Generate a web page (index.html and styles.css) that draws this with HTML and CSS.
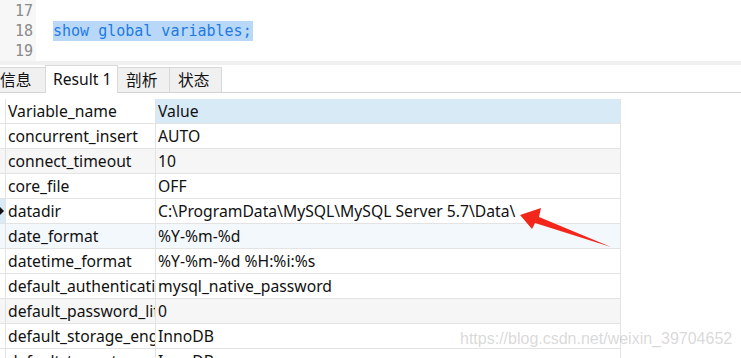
FILE: index.html
```html
<!DOCTYPE html>
<html lang="zh-CN">

<head>
    <meta charset="UTF-8">
    <title>Result 1</title>
    <link rel="stylesheet" href="styles.css">
</head>

<body>
    <div class="page">
        <!-- query editor -->
        <div class="editor">
            <div class="gutter">
                <div class="ln">17</div>
                <div class="ln">18</div>
                <div class="ln">19</div>
            </div>
            <div class="code">
                <div class="line"></div>
                <div class="line"><span class="sel">show global variables;</span></div>
                <div class="line"></div>
            </div>
        </div>
        <div class="split"></div>

        <!-- result tabs -->
        <div class="tabs">
            <div class="tab first">信息</div>
            <div class="tab active">Result 1</div>
            <div class="tab">剖析</div>
            <div class="tab">状态</div>
            <div class="tab-rest"></div>
        </div>

        <!-- result grid -->
        <div class="grid">
            <div class="row head">
                <div class="cell mark"></div>
                <div class="cell name">Variable_name</div>
                <div class="cell value sorted">Value</div>
            </div>
            <div class="row">
                <div class="cell mark"></div>
                <div class="cell name">concurrent_insert</div>
                <div class="cell value">AUTO</div>
            </div>
            <div class="row alt">
                <div class="cell mark"></div>
                <div class="cell name">connect_timeout</div>
                <div class="cell value">10</div>
            </div>
            <div class="row">
                <div class="cell mark"></div>
                <div class="cell name">core_file</div>
                <div class="cell value">OFF</div>
            </div>
            <div class="row current">
                <div class="cell mark"><span class="caret"></span></div>
                <div class="cell name">datadir</div>
                <div class="cell value">C:\ProgramData\MySQL\MySQL Server 5.7\Data\</div>
            </div>
            <div class="row hover">
                <div class="cell mark"></div>
                <div class="cell name">date_format</div>
                <div class="cell value">%Y-%m-%d</div>
            </div>
            <div class="row">
                <div class="cell mark"></div>
                <div class="cell name">datetime_format</div>
                <div class="cell value">%Y-%m-%d %H:%i:%s</div>
            </div>
            <div class="row">
                <div class="cell mark"></div>
                <div class="cell name">default_authentication_plugin</div>
                <div class="cell value">mysql_native_password</div>
            </div>
            <div class="row alt">
                <div class="cell mark"></div>
                <div class="cell name">default_password_lifetime</div>
                <div class="cell value">0</div>
            </div>
            <div class="row">
                <div class="cell mark"></div>
                <div class="cell name">default_storage_engine</div>
                <div class="cell value">InnoDB</div>
            </div>
            <div class="row">
                <div class="cell mark"></div>
                <div class="cell name">default_tmp_storage_engine</div>
                <div class="cell value">InnoDB</div>
            </div>
        </div>

        <!-- annotation arrow -->
        <svg class="arrow" width="741" height="358" viewBox="0 0 741 358">
            <polygon points="520,215 541,208 539,217 611,247 535,223 532,229" fill="#f2261b" />
        </svg>
        <div class="watermark">https://blog.csdn.net/weixin_39704652</div>
    </div>
</body>

</html>
```

FILE: styles.css
```css
/* page frame */
body {
    margin: 0;
    background-color: #fff;
    font-family: 'Noto Sans', 'Noto Sans CJK SC', sans-serif;
    color: #111;
}

.page {
    position: relative;
    width: 741px;
    height: 358px;
    overflow: hidden;
}

/* editor */
.editor {
    display: flex;
    height: 61px;
    overflow: hidden;
    font-family: 'DejaVu Sans Mono', monospace;
    font-size: 15px;
}

.gutter {
    width: 36px;
    padding-top: 1px;
    background-color: #f7f7f7;
    color: #8a8a8a;
    text-align: right;
    box-sizing: border-box;
    padding-right: 3px;
}

.ln,
.line {
    height: 20px;
    line-height: 20px;
}

.code {
    padding-top: 1px;
    padding-left: 17px;
    color: #1f7be0;
}

.sel {
    background-color: #b9d8f7;
    display: inline-block;
    height: 20px;
    padding-right: 1px;
}

.split {
    height: 4px;
    background-color: #f0f0f0;
}

/* tabs */
.tabs {
    display: flex;
    align-items: flex-end;
    height: 28px;
    font-size: 15.7px;
}

.tab {
    height: 25px;
    line-height: 24px;
    padding: 0 8px;
    background-color: #f0f0f0;
    border: 1px solid #d9d9d9;
    border-bottom: none;
    box-sizing: border-box;
    border-left: none;
    width: 52px;
    white-space: nowrap;
}

.tab.first {
    margin-left: -6px;
    width: 52px;
    padding-left: 6px;
}

.tab.active {
    height: 28px;
    line-height: 27px;
    background-color: #fff;
    border-left: 1px solid #d9d9d9;
    width: 73px;
    padding-left: 7px;
    margin-left: -1px;
}

.tab-rest {
    flex: 1;
    height: 1px;
    background-color: #d4d4d4;
}

.tab:not(.active) {
    border-bottom: 1px solid #d4d4d4;
    height: 26px;
}

/* grid */
.grid {
    margin-top: 6px;
    font-size: 15.7px;
}

.row {
    display: flex;
    height: 25px;
}

.cell {
    height: 25px;
    line-height: 24px;
    box-sizing: border-box;
    border-right: 1px solid #e3e3e3;
    border-bottom: 1px solid #e3e3e3;
    white-space: nowrap;
    overflow: hidden;
}

.mark {
    width: 6px;
    position: relative;
}

.name {
    width: 150px;
    padding-left: 2px;
}

.value {
    width: 465px;
    padding-left: 2px;
}

.head .name {
    background-color: #fff;
}

.value.sorted {
    background-color: #d9eaf7;
}

.alt .cell {
    background-color: #f6f6f6;
}

.hover .cell {
    background-color: #f3f8fd;
}

.current .mark {
    background-color: #d9eaf7;
}

.caret {
    position: absolute;
    left: 0;
    top: 8px;
    border-top: 4px solid transparent;
    border-bottom: 4px solid transparent;
    border-left: 4px solid #111;
}

/* overlays */
.arrow {
    position: absolute;
    left: 0;
    top: 0;
}

.watermark {
    position: absolute;
    left: 460px;
    top: 330px;
    font-family: 'Liberation Sans', sans-serif;
    font-size: 16px;
    color: rgba(170, 170, 170, 0.45);
    text-shadow: 1px 1px 0 rgba(255, 255, 255, 0.6);
    white-space: nowrap;
}
```
